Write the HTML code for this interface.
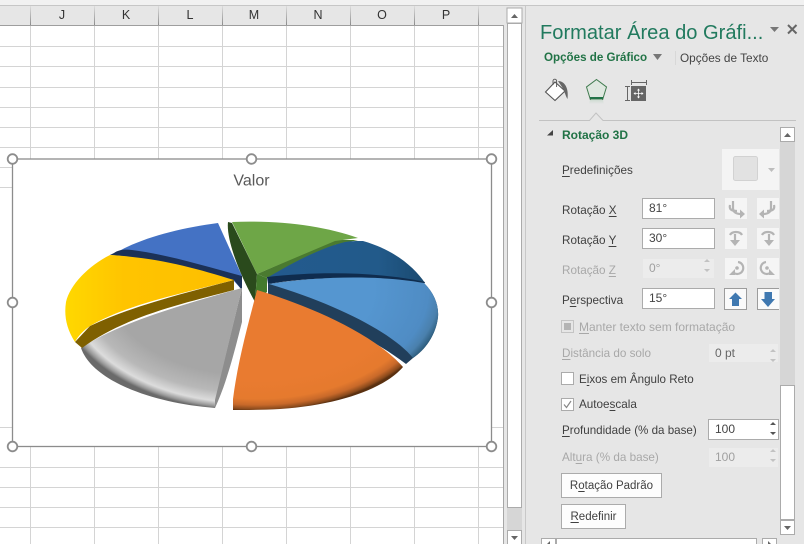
<!DOCTYPE html>
<html><head><meta charset="utf-8"><style>
html,body{margin:0;padding:0}
body{width:804px;height:544px;overflow:hidden;position:relative;background:#e6e6e6;font-family:"Liberation Sans",sans-serif;font-size:12px;color:#444}
.a{position:absolute;white-space:nowrap}
.t{position:absolute;white-space:nowrap;line-height:16px;height:16px;left:562px;font-size:11.7px;color:#404040;margin-top:1px}
.d{color:#a8a8a8}
.i{position:absolute;box-sizing:border-box;background:#fff;border:1px solid #ababab;height:21px;line-height:18px;padding-left:6px;color:#444}
.i.x{background:#ececec;border-color:#e6e6e6;color:#a0a0a0}
.b{position:absolute;box-sizing:border-box;background:#fdfdfd;border:1px solid #ababab;text-align:center;color:#404040;line-height:25px;height:25px;font-size:11.5px}
.c{position:absolute;box-sizing:border-box;width:13px;height:13px;left:561px;background:#fff;border:1px solid #ababab}
u{text-decoration-thickness:1px;text-underline-offset:2px}
</style></head><body>
<svg class="a" style="left:0;top:0" width="804" height="544" viewBox="0 0 804 544">
<defs>
<radialGradient id="gr" gradientUnits="userSpaceOnUse" cx="0" cy="0" r="1" gradientTransform="translate(245 283) scale(190 127)">
<stop offset=".72" stop-color="#a6a6a6"/><stop offset=".86" stop-color="#b8b8b8"/><stop offset=".94" stop-color="#dcdcdc"/><stop offset=".98" stop-color="#999"/><stop offset="1" stop-color="#6a6a6a"/></radialGradient>
<radialGradient id="or" gradientUnits="userSpaceOnUse" cx="0" cy="0" r="1" gradientTransform="translate(257 290) scale(189 121)">
<stop offset=".75" stop-color="#e97b30"/><stop offset=".9" stop-color="#e57a2e"/><stop offset=".95" stop-color="#c8692a"/><stop offset=".985" stop-color="#8a4a1c"/><stop offset="1" stop-color="#5a3010"/></radialGradient>
<radialGradient id="lb" gradientUnits="userSpaceOnUse" cx="0" cy="0" r="1" gradientTransform="translate(262 290) scale(185 118)">
<stop offset=".6" stop-color="#5596d0"/><stop offset=".9" stop-color="#4f8cc4"/><stop offset=".96" stop-color="#4a80ad"/><stop offset="1" stop-color="#2f5f80"/></radialGradient>
<linearGradient id="ye" x1="0" x2="1" y1="0" y2="0"><stop offset="0" stop-color="#ffd800"/><stop offset=".35" stop-color="#ffc400"/><stop offset="1" stop-color="#fdbf00"/></linearGradient>
<linearGradient id="nv" x1="0" x2="1" y1="0" y2="0"><stop offset="0" stop-color="#235a8e"/><stop offset=".7" stop-color="#225a8a"/><stop offset="1" stop-color="#1a4a70"/></linearGradient>
<linearGradient id="sep" x1="0" x2="0" y1="0" y2="1"><stop offset="0" stop-color="#dcdcdc"/><stop offset="1" stop-color="#8c8c8c"/></linearGradient>
<linearGradient id="pf" x1="0" x2="0" y1="0" y2="1"><stop offset="0" stop-color="#cfdcd2"/><stop offset="1" stop-color="#e6e6e6"/></linearGradient>
</defs>

<!-- ribbon strip -->
<rect x="0" y="0" width="804" height="5" fill="#f1f1f1"/>
<rect x="0" y="5" width="804" height="1" fill="#c6c6c6"/>
<!-- sheet -->
<rect x="0" y="25" width="503" height="519" fill="#fff"/>
<rect x="0" y="6" width="503" height="19" fill="#e6e6e6"/>
<rect x="0" y="25" width="503" height="1" fill="#9e9e9e"/>
<rect x="503" y="25" width="1" height="519" fill="#a6a6a6"/>
<g fill="url(#sep)"><rect x="30" y="6" width="1" height="19"/><rect x="94" y="6" width="1" height="19"/><rect x="158" y="6" width="1" height="19"/><rect x="222" y="6" width="1" height="19"/><rect x="286" y="6" width="1" height="19"/><rect x="350" y="6" width="1" height="19"/><rect x="414" y="6" width="1" height="19"/><rect x="478" y="6" width="1" height="19"/></g>
<g stroke="#d4d4d4" stroke-width="1">
<path d="M30.5 26V544M94.5 26V544M158.5 26V544M222.5 26V544M286.5 26V544M350.5 26V544M414.5 26V544M478.5 26V544"/>
<path d="M0 46.5H503M0 66.5H503M0 87.5H503M0 107.5H503M0 127.5H503M0 147.5H503M0 427.5H503M0 467.5H503M0 487.5H503M0 507.5H503M0 527.5H503M0 167.5H12M0 187.5H12"/>
</g>
<!-- sheet scrollbar -->
<rect x="504" y="6" width="22" height="538" fill="#e6e6e6"/>
<rect x="507" y="8" width="15" height="15" fill="#fff" stroke="#ababab"/>
<rect x="507.500" y="23.5" width="14" height="484" fill="#fff" stroke="#ababab"/>
<path d="M511 18l3.500-4 3.500 4z" fill="#666"/>
<rect x="507" y="508" width="15" height="22" fill="#d6d6d6"/>
<rect x="507.500" y="530.5" width="14" height="14" fill="#fff" stroke="#ababab"/>
<path d="M511 536l3.500 4 3.500-4z" fill="#666"/>
<rect x="525" y="6" width="1" height="538" fill="#c8c8c8"/>

<!-- chart -->
<rect x="12.500" y="159" width="479" height="287.500" fill="#fff" stroke="#8c8c8c" stroke-width="1.300"/>

<!-- blue slice -->
<path d="M114 254C140 238 180 228 218 223L242 276V290L234 281C190 268 150 258 114 254Z" fill="#4472c4"/>
<path d="M114 253C118 250 124 249 132 250C165 254 205 266 242 276V290L234 280L234 281C195 268 150 258 110 255Z" fill="#1b3157"/>
<!-- gray -->
<path d="M242 288V322C236 345 228 380 215 408L215 398Z" fill="#8d8d8d"/>
<path d="M242 288C185 304 120 322 81 348C92 380 150 403 215 408V400Z" fill="url(#gr)"/>
<!-- yellow -->
<path d="M234 280V290C185 303 125 316 82 348L75 342L90 326C135 305 185 293 234 280Z" fill="#7f6000"/>
<path d="M110 255C160 258 195 268 234 280C185 293 130 303 90 326C84 330 78 336 75 342C66 328 64 315 66 302C70 285 88 266 110 255Z" fill="url(#ye)"/>
<!-- green -->
<path d="M228 222C226 240 240 275 255 302L257 274L232 223Z" fill="#2a4a1c"/>
<path d="M257 274L267 278V292L255 302Z" fill="#437a2c"/>
<path d="M257 274L267 278L335 245L358 240L335 240Z" fill="#4a7a30"/>
<path d="M232 222C280 220 325 226 358 238L335 241L257 274Z" fill="#6ea647"/>
<!-- navy -->
<path d="M267 278C290 264 320 248 345 242C352 241 356 241 363 241C395 250 415 268 425 283C375 274 315 272 267 278Z" fill="url(#nv)"/>
<path d="M267 277C320 271 380 272 425 282L424 284C375 276 315 276 268 284Z" fill="#0f2c4e"/>
<!-- light blue -->
<path d="M268 284C320 276 380 275 424 283C434 293 439 305 438 317C436 335 425 350 413 358L406 364C375 340 320 312 268 300Z" fill="#213f5b"/>
<path d="M269 284C320 276 380 275 424 283C434 293 439 305 438 317C436 335 425 350 413 358C395 335 340 305 269 284Z" fill="url(#lb)"/>
<!-- orange -->
<path d="M257 290C300 303 370 330 403 367C385 388 340 405 280 409C262 410 248 410 233 410V399C238 360 248 325 257 290Z" fill="url(#or)"/>

<!-- title -->
<text x="251.500" y="185.500" text-anchor="middle" font-family="Liberation Sans" font-size="16" fill="#595959">Valor</text>

<!-- handles -->
<g fill="#fff" stroke="#8c8c8c" stroke-width="1.800">
<circle cx="12.500" cy="159" r="4.800"/><circle cx="251.500" cy="159" r="4.800"/><circle cx="491.500" cy="159" r="4.800"/>
<circle cx="12.500" cy="302.500" r="4.800"/><circle cx="491.500" cy="302.500" r="4.800"/>
<circle cx="12.500" cy="446.500" r="4.800"/><circle cx="251.500" cy="446.500" r="4.800"/><circle cx="491.500" cy="446.500" r="4.800"/>
</g>

<!-- panel header bits -->
<path d="M770 27h9l-4.500 5z" fill="#777"/>
<path d="M788 25l8.500 8.500M796.500 25l-8.500 8.500" stroke="#666" stroke-width="2"/>
<path d="M653 54h9l-4.500 6z" fill="#777"/>
<rect x="675" y="51" width="1" height="14" fill="#d8d8d8"/>

<!-- paint bucket -->
<path d="M545.500 92L555 82L565 91L555 100.500Z" fill="#fff" stroke="#555" stroke-width="1.100"/>
<path d="M553 85V81a1.800 1.800 0 0 1 3.600 0V87" fill="none" stroke="#555" stroke-width=".9"/>
<path d="M558 81C564 81 569 87 567.500 99C565.500 96 565 92 562 87Z" fill="#666"/>
<!-- pentagon -->
<path d="M596.500 79.500L606.500 87L602.500 100H590.500L586.500 87Z" fill="#dfe8e0" stroke="#3f7a4e" stroke-width="1"/>
<rect x="590" y="97" width="13" height="2" fill="#217346"/>
<path d="M590 100H603L604 104H589Z" fill="url(#pf)"/>
<!-- size icon -->
<path d="M631.500 82.500H646.500M631.500 80V85M646.500 80V85" stroke="#666" fill="none"/>
<path d="M627.500 87V100M625 86.500H630M625 100.500H630" stroke="#666" fill="none"/>
<rect x="631" y="86" width="15" height="15" fill="#666"/>
<path d="M638.500 90V97M635 93.500H642" stroke="#fff" stroke-width=".8"/>
<path d="M637 90.500l1.500-2 1.500 2zM637 96.500l1.500 2 1.500-2zM635.500 92l-2 1.500 2 1.500zM641.500 92l2 1.500-2 1.500z" fill="#fff"/>
<!-- divider with notch -->
<path d="M539 120.500H589.500L596 113L603 120.500H796" fill="none" stroke="#c2c2c2"/>

<!-- section triangle -->
<path d="M553 130v5.500h-6z" fill="#444"/>

<!-- right scrollbar -->
<rect x="780" y="127" width="15" height="408" fill="#d6d6d6"/>
<rect x="780.500" y="127.500" width="14" height="14" fill="#fff" stroke="#ababab"/>
<path d="M784 137l3.500-4 3.500 4z" fill="#666"/>
<rect x="780.500" y="385.500" width="14" height="134" fill="#fff" stroke="#ababab"/>
<rect x="780.500" y="520.500" width="14" height="14" fill="#fff" stroke="#ababab"/>
<path d="M784 526l3.500 4 3.500-4z" fill="#666"/>
<!-- horizontal scrollbar -->
<rect x="541.500" y="538.500" width="14" height="14" fill="#fff" stroke="#ababab"/>
<rect x="556.500" y="538.500" width="200" height="14" fill="#fff" stroke="#ababab"/>
<rect x="762.500" y="538.500" width="14" height="14" fill="#fff" stroke="#ababab"/>
<path d="M550 541l-3 3h3zM768 541l3 3h-3z" fill="#666"/>

<!-- preset -->
<rect x="722" y="149" width="57" height="41" fill="#f4f4f4"/>
<rect x="733.500" y="156.500" width="24" height="24" rx="2" fill="#e2e2e2" stroke="#d2d2d2"/>
<path d="M768 168h7l-3.500 4z" fill="#bdbdbd"/>

<!-- icon buttons -->
<g fill="#f5f5f5"><rect x="725" y="198" width="22" height="21"/><rect x="757" y="198" width="22" height="21"/><rect x="725" y="228" width="22" height="21"/><rect x="757" y="228" width="22" height="21"/><rect x="725" y="258" width="22" height="21"/><rect x="757" y="258" width="22" height="21"/></g>
<g fill="none" stroke="#b4b4b4" stroke-width="2.200">
<path d="M733 201V208C733 212 736 214 741 214"/><path d="M730 205C729 209 731 211 737 211"/>
<path d="M771 201V208C771 212 768 214 763 214"/><path d="M774 205C775 209 773 211 767 211"/>
<path d="M730 235C732 231 740 231 742 235"/><path d="M735 234V242"/>
<path d="M774 235C772 231 764 231 762 235"/><path d="M769 234V242"/>
<path d="M738 262A6 6 0 1 1 734 273"/><path d="M766 262A6 6 0 1 0 770 273"/>
</g>
<g fill="#b4b4b4">
<path d="M740 209.500l5 4.500-5 4.500zM764 209.500l-5 4.500 5 4.500zM730 240h10l-5 6zM764 240h10l-5 6zM735 269v6h-6zM769 269v6h6z"/>
<circle cx="737" cy="268" r="1.800"/><circle cx="767" cy="268" r="1.800"/>
</g>
<rect x="724.500" y="288.500" width="22" height="21" fill="#fafafa" stroke="#9c9c9c"/>
<rect x="757.500" y="288.500" width="22" height="21" fill="#fafafa" stroke="#9c9c9c"/>
<path d="M735.500 292.500L742 299H739V306H732V299H729Z" fill="#3f78b0"/>
<path d="M764.500 292H772V299H775L768 307L761 299H764.500Z" fill="#3f78b0"/>
<!-- right clip of icon area -->
<rect x="779" y="196" width="1" height="116" fill="#e6e6e6"/>

<!-- spinner arrows -->
<g fill="#555">
<path d="M704 204l3-3 3 3zM704 211l3 3 3-3zM704 234l3-3 3 3zM704 241l3 3 3-3zM704 294l3-3 3 3zM704 301l3 3 3-3z"/>
</g>
</svg>

<div class="a" style="left:56px;top:7px;line-height:17px;font-size:12.500px;color:#333;width:12px;text-align:center">J</div>
<div class="a" style="left:120px;top:7px;line-height:17px;font-size:12.500px;color:#333;width:12px;text-align:center">K</div>
<div class="a" style="left:184px;top:7px;line-height:17px;font-size:12.500px;color:#333;width:12px;text-align:center">L</div>
<div class="a" style="left:248px;top:7px;line-height:17px;font-size:12.500px;color:#333;width:12px;text-align:center">M</div>
<div class="a" style="left:312px;top:7px;line-height:17px;font-size:12.500px;color:#333;width:12px;text-align:center">N</div>
<div class="a" style="left:376px;top:7px;line-height:17px;font-size:12.500px;color:#333;width:12px;text-align:center">O</div>
<div class="a" style="left:440px;top:7px;line-height:17px;font-size:12.500px;color:#333;width:12px;text-align:center">P</div>

<div class="a" style="left:540px;top:20px;font-size:20.100px;line-height:26px;color:#217a5e">Formatar Área do Gráfi...</div>
<div class="a" style="left:544px;top:50px;font-size:11.600px;line-height:16px;font-weight:bold;color:#217346">Opções de Gráfico</div>
<div class="a" style="left:680px;top:50px;font-size:11.800px;line-height:16px;color:#444">Opções de Texto</div>
<div class="a" style="left:562px;top:127px;font-size:12px;line-height:16px;font-weight:bold;color:#217346">Rotação 3D</div>

<div class="t" style="top:162px"><u>P</u>redefinições</div>
<div class="t" style="top:202px">Rotação <u>X</u></div>
<div class="t" style="top:232px">Rotação <u>Y</u></div>
<div class="t d" style="top:262px">Rotação <u>Z</u></div>
<div class="t" style="top:292px">P<u>e</u>rspectiva</div>

<div class="i" style="left:642px;top:198px;width:73px">81°</div>
<div class="i" style="left:642px;top:228px;width:73px">30°</div>
<div class="i x" style="left:642px;top:258px;width:73px">0°</div>
<div class="i" style="left:642px;top:288px;width:73px">15°</div>

<div class="c" style="top:320px;border-color:#c4c4c4;background:#e6e6e6"><div style="margin:2px;width:7px;height:7px;background:#b4b4b4"></div></div>
<div class="t d" style="left:579px;top:318px;font-size:12px"><u>M</u>anter texto sem formatação</div>
<div class="t d" style="top:345px"><u>D</u>istância do solo</div>
<div class="i x" style="left:708px;top:343px;width:71px;height:20px;color:#666">0 pt</div>

<div class="c" style="top:372px"></div>
<div class="t" style="left:579px;top:371px;font-size:11.600px">E<u>i</u>xos em Ângulo Reto</div>
<div class="c" style="top:398px"><svg width="11" height="11" style="display:block"><path d="M2 5.500L4.500 8.500L9 2" fill="none" stroke="#888" stroke-width="1.200"/></svg></div>
<div class="t" style="left:579px;top:396px">Autoe<u>s</u>cala</div>

<div class="t" style="top:422px;font-size:11.600px"><u>P</u>rofundidade (% da base)</div>
<div class="i" style="left:708px;top:419px;width:71px">100</div>
<div class="t d" style="top:449px">Alt<u>u</u>ra (% da base)</div>
<div class="i x" style="left:708px;top:447px;width:71px">100</div>

<div class="b" style="left:561px;top:473px;width:101px">R<u>o</u>tação Padrão</div>
<div class="b" style="left:561px;top:504px;width:65px"><u>R</u>edefinir</div>

<svg class="a" style="left:700px;top:190px" width="80" height="290">
<g fill="#c2c2c2"><path d="M4 72l3-3 3 3zM4 79l3 3 3-3zM70 162l3-3 3 3zM70 169l3 3 3-3zM70 262l3-3 3 3zM70 269l3 3 3-3z"/></g>
<g fill="#555"><path d="M70 235l3-3 3 3zM70 242l3 3 3-3z"/></g>
</svg>
</body></html>
